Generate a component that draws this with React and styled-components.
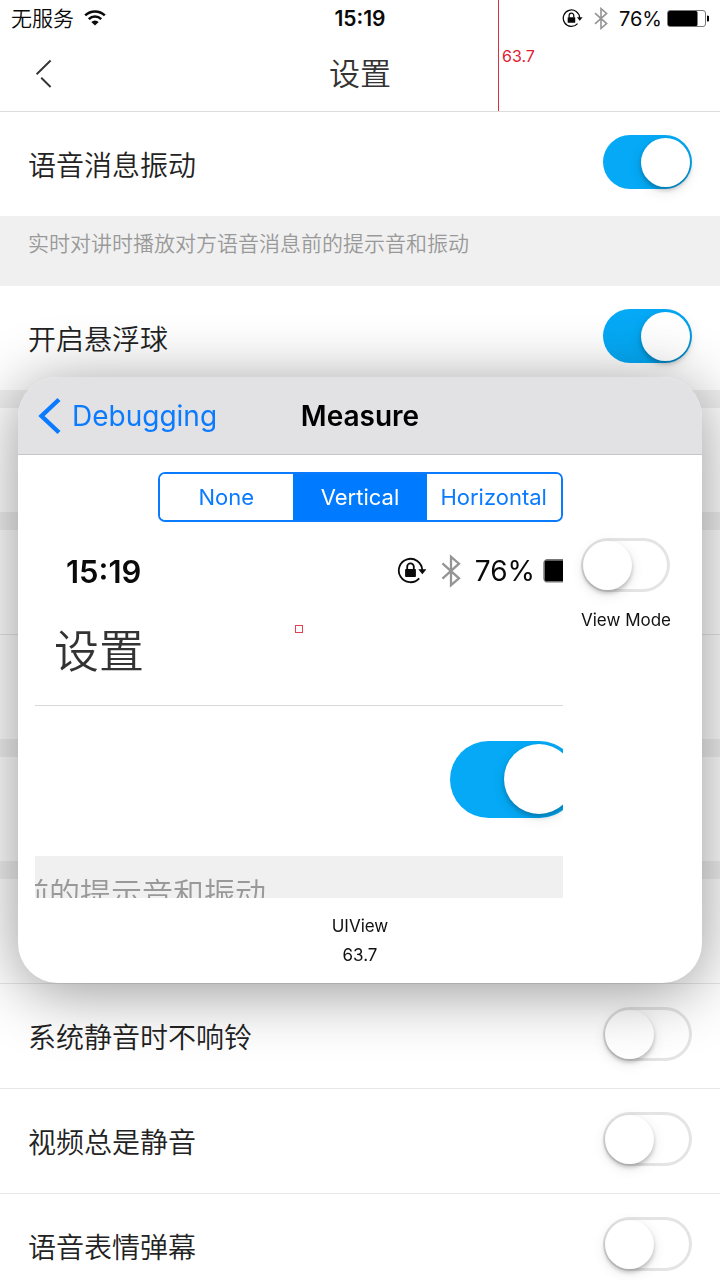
import React from "react";
import styled, { createGlobalStyle, css } from "styled-components";

const GlobalStyle = createGlobalStyle`
  *, *::before, *::after { box-sizing: border-box; }
  body {
    margin: 0;
    background: #fff;
    color: #222;
    font-family: Inter, "Noto Sans CJK SC", sans-serif;
  }
  button, input { font: inherit; margin: 0; }
  h1, h2, p { margin: 0; }
`;

const Screen = styled.main`
  position: relative;
  height: 100vh;
  overflow: hidden;
`;

const Header = styled.header`
  border-bottom: 1px solid #dcdcdc;
`;

const StatusBar = styled.div`
  display: grid;
  grid-template-columns: 1fr auto 1fr;
  align-items: center;
  height: 37px;
  padding: 0 11px;
  color: #0a0a0a;
  font-size: 20px;
`;

const StatusGroup = styled.div`
  display: flex;
  align-items: center;
  justify-content: ${(p) => (p.$end ? "flex-end" : "flex-start")};
  gap: ${(p) => p.$gap}px;
`;

const Carrier = styled.span`
  font-size: 21px;
  line-height: 24px;
  font-weight: 350;
`;

const Clock = styled.time`
  font-size: ${(p) => (p.$large ? 31 : 21)}px;
  font-weight: 600;
  color: #0a0a0a;
`;

const NavBar = styled.div`
  display: grid;
  grid-template-columns: 1fr auto 1fr;
  align-items: center;
  height: 74px;
  padding: 0 35px;
`;

const IconButton = styled.button`
  display: flex;
  justify-self: start;
  padding: 0;
  border: 0;
  background: none;
  color: #333;
`;

const Title = styled.h1`
  font-size: ${(p) => (p.$large ? 45 : 31)}px;
  line-height: ${(p) => (p.$large ? 64 : 40)}px;
  font-weight: 350;
  color: #333;
`;

const Ruler = styled.div`
  position: absolute;
  top: 0;
  left: 498px;
  display: flex;
  align-items: center;
  height: 111px;
  padding-left: 3px;
  border-left: 1px solid #d9303f;
  color: #e02030;
  font-size: 16px;
`;

const Row = styled.div`
  display: flex;
  align-items: center;
  justify-content: space-between;
  height: 104px;
  padding: 0 28px;
`;

const RowLabel = styled.label`
  padding-top: 3px;
  font-size: 28px;
  line-height: 40px;
  font-weight: 350;
  color: #222;
`;

const Divider = styled.hr`
  height: 1px;
  margin: 0;
  border: 0;
  background: #e6e6e6;
`;

const Gap = styled.div`
  height: 18px;
  background: #f0f0f0;
`;

const Note = styled.p`
  height: 70px;
  padding: 13px 28px;
  background: #f0f0f0;
  color: #999;
  font-size: 21px;
  line-height: 30px;
  font-weight: 350;
`;

const switchSizes = {
  normal: css`
    --w: 89px;
    --h: 54px;
    --knob: 49px;
    --inset: 2px;
  `,
  large: css`
    --w: 128px;
    --h: 77px;
    --knob: 70px;
    --inset: 4px;
  `,
};

const Switch = styled.input.attrs({ type: "checkbox", role: "switch" })`
  ${(p) => switchSizes[p.$size || "normal"]}
  appearance: none;
  flex: none;
  display: flex;
  align-items: center;
  width: var(--w);
  height: var(--h);
  margin-bottom: 4px;
  border-radius: var(--h);
  box-shadow: inset 0 0 0 3px #e4e4e4;

  &::before {
    content: "";
    width: var(--knob);
    height: var(--knob);
    margin: 0 var(--inset);
    border-radius: 50%;
    background: #fff;
    box-shadow: 0 3px 4px rgba(0, 0, 0, 0.22), 0 4px 14px rgba(0, 0, 0, 0.1);
  }

  &:checked {
    justify-content: flex-end;
    background: #05a9f5;
    box-shadow: none;
  }
`;

const Panel = styled.section`
  position: absolute;
  top: 377px;
  left: 18px;
  right: 18px;
  overflow: hidden;
  border-radius: 40px;
  background: #fff;
`;

const PanelShadow = styled.div`
  position: absolute;
  inset: 0;
  filter: drop-shadow(0 8px 32px rgba(0, 0, 0, 0.42));
`;

const PanelHeader = styled.header`
  display: grid;
  grid-template-columns: 1fr auto 1fr;
  align-items: center;
  height: 78px;
  padding: 1px 20px 0;
  border-bottom: 1px solid #c6c6c8;
  background: #e2e2e4;
`;

const BackLink = styled.a`
  display: flex;
  align-items: center;
  gap: 10px;
  color: #0a7aff;
  font-size: 28px;
  text-decoration: none;
`;

const PanelTitle = styled.h2`
  color: #000;
  font-size: 28px;
  font-weight: 600;
`;

const Segments = styled.div`
  display: grid;
  grid-template-columns: repeat(3, 1fr);
  width: 405px;
  height: 50px;
  margin: 17px auto 0;
  overflow: hidden;
  border: 2px solid #0a7aff;
  border-radius: 7px;
`;

const Segment = styled.button`
  padding: 0;
  border: 0;
  background: ${(p) => (p.$active ? "#007aff" : "#fff")};
  color: ${(p) => (p.$active ? "#fff" : "#0a7aff")};
  font-size: 22px;
`;

const PanelBody = styled.div`
  display: flex;
  padding: 0 17px;
`;

const Magnifier = styled.div`
  position: relative;
  flex: 1;
  min-width: 0;
  height: 376px;
  overflow: hidden;
`;

const Target = styled.span`
  position: absolute;
  top: 103px;
  left: 50%;
  width: 8px;
  height: 8px;
  margin-left: -4px;
  border: 1px solid #e0414f;
`;

const ZoomHeader = styled.div`
  height: 184px;
  border-bottom: 1px solid #d8d8d8;
`;

const ZoomStatus = styled.div`
  display: flex;
  align-items: center;
  justify-content: space-between;
  height: 98px;
  padding-left: 31px;
  color: #0a0a0a;
  font-size: 28px;
`;

const ZoomTitle = styled.div`
  padding-left: 19px;
`;

const ZoomRow = styled.div`
  display: flex;
  align-items: center;
  height: 150px;
  padding-left: 415px;
`;

const ZoomNote = styled.p`
  display: flex;
  justify-content: flex-end;
  height: 42px;
  padding: 20px 297px 0 0;
  background: #f0f0f0;
  color: #999;
  font-size: 31px;
  line-height: 36px;
  font-weight: 350;
  white-space: nowrap;
`;

const Side = styled.div`
  display: flex;
  flex-direction: column;
  align-items: flex-start;
  gap: 12px;
  width: 122px;
  padding: 16px 0 0 18px;
`;

const Caption = styled.label`
  color: #111;
  font-size: 17px;
  line-height: 24px;
  white-space: nowrap;
`;

const Readout = styled.footer`
  padding: 14px 0 13px;
  color: #111;
  font-size: 17px;
  line-height: 29px;
  text-align: center;
`;

function WifiIcon() {
  return (
    <svg width="22" height="17" viewBox="0 0 22 17" fill="none" stroke="#0a0a0a" strokeWidth="2.5" aria-hidden="true">
      <path d="M1.2 5.4a14 14 0 0 1 19.6 0" />
      <path d="M4.8 9.1a8.8 8.8 0 0 1 12.4 0" />
      <path d="M11 15.6 7.3 11.9a5.3 5.3 0 0 1 7.4 0z" fill="#0a0a0a" stroke="none" />
    </svg>
  );
}

function BackIcon() {
  return (
    <svg width="18" height="30" viewBox="0 0 18 30" fill="none" stroke="currentColor" strokeWidth="1.9" aria-hidden="true">
      <path d="M15.6 1.5 1.6 15.2M6.2 18.8 15.6 28" />
    </svg>
  );
}

function ChevronIcon() {
  return (
    <svg width="24" height="38" viewBox="0 0 24 38" fill="none" stroke="currentColor" strokeWidth="4.4" aria-hidden="true">
      <path d="M21 2.5 3.5 19 21 35.5" />
    </svg>
  );
}

function RotationLockIcon({ size }) {
  return (
    <svg width={size} height={size} viewBox="0 0 20 20" fill="none" stroke="#0a0a0a" aria-hidden="true">
      <path d="M14.8 14.9A7.8 7.8 0 1 1 16.8 9.4" strokeWidth="1.2" />
      <path d="M14.2 8.9h5.4l-2.7 3.2z" fill="#0a0a0a" stroke="none" />
      <rect x="5.4" y="8.7" width="7.2" height="5.3" rx="0.5" fill="#0a0a0a" stroke="none" />
      <path d="M6.8 9V7.1a2.2 2.2 0 0 1 4.4 0V9" strokeWidth="1.2" />
    </svg>
  );
}

function BluetoothIcon({ width, height }) {
  return (
    <svg width={width} height={height} viewBox="0 0 14 23" fill="none" stroke="#959595" strokeWidth="1.6" aria-hidden="true">
      <path d="M1 6.2 12.6 16.6 7 21.4V1.6l5.6 4.8L1 16.8" />
    </svg>
  );
}

function BatteryIcon({ width, height, clipped }) {
  return (
    <svg width={width} height={height} viewBox={clipped ? "0 0 14 18" : "0 0 42 18"} fill="none" aria-hidden="true">
      <rect x="0.5" y="0.5" width="38" height="16" rx="2.5" stroke="#777" />
      <rect x="1" y="1" width="29.5" height="15" rx="1.5" fill="#000" />
      <path d="M40 5.5a3 3 0 0 1 0 6z" fill="#000" />
    </svg>
  );
}

function SettingRow({ id, label, on }) {
  return (
    <Row>
      <RowLabel htmlFor={id}>{label}</RowLabel>
      <Switch id={id} defaultChecked={on} />
    </Row>
  );
}

function MagnifiedView() {
  return (
    <Magnifier>
      <ZoomHeader>
        <ZoomStatus>
          <Clock $large>15:19</Clock>
          <StatusGroup $gap={14}>
            <RotationLockIcon size={30} />
            <BluetoothIcon width={20} height={34} />
            <StatusGroup $gap={8}>
              <span>76%</span>
              <BatteryIcon width={20} height={25} clipped />
            </StatusGroup>
          </StatusGroup>
        </ZoomStatus>
        <ZoomTitle>
          <Title as="p" $large>设置</Title>
        </ZoomTitle>
      </ZoomHeader>
      <ZoomRow>
        <Switch $size="large" defaultChecked aria-label="语音消息振动" />
      </ZoomRow>
      <ZoomNote>前的提示音和振动</ZoomNote>
      <Target />
    </Magnifier>
  );
}

function MeasurePanel() {
  const [mode, setMode] = React.useState("Vertical");
  return (
    <PanelShadow>
      <Panel>
        <PanelHeader>
          <BackLink href="#debugging">
            <ChevronIcon />
            Debugging
          </BackLink>
          <PanelTitle>Measure</PanelTitle>
        </PanelHeader>
        <Segments>
          {["None", "Vertical", "Horizontal"].map((name) => (
            <Segment
              key={name}
              type="button"
              aria-pressed={mode === name}
              $active={mode === name}
              onClick={() => setMode(name)}
            >
              {name}
            </Segment>
          ))}
        </Segments>
        <PanelBody>
          <MagnifiedView />
          <Side>
            <Switch id="view-mode" />
            <Caption htmlFor="view-mode">View Mode</Caption>
          </Side>
        </PanelBody>
        <Readout>
          <p>UIView</p>
          <p>63.7</p>
        </Readout>
      </Panel>
    </PanelShadow>
  );
}

export default function App() {
  return (
    <Screen>
      <GlobalStyle />
      <Header>
        <StatusBar>
          <StatusGroup $gap={10}>
            <Carrier>无服务</Carrier>
            <WifiIcon />
          </StatusGroup>
          <Clock>15:19</Clock>
          <StatusGroup $end $gap={11}>
            <RotationLockIcon size={21} />
            <BluetoothIcon width={14} height={23} />
            <StatusGroup $gap={5}>
              <span>76%</span>
              <BatteryIcon width={42} height={18} />
            </StatusGroup>
          </StatusGroup>
        </StatusBar>
        <NavBar>
          <IconButton type="button" aria-label="返回">
            <BackIcon />
          </IconButton>
          <Title>设置</Title>
        </NavBar>
      </Header>
      <SettingRow id="voice-vibrate" label="语音消息振动" on />
      <Note>实时对讲时播放对方语音消息前的提示音和振动</Note>
      <SettingRow id="floating-ball" label="开启悬浮球" on />
      <Gap />
      <Row />
      <Gap />
      <Row />
      <Divider />
      <Row />
      <Gap />
      <Row />
      <Gap />
      <Row />
      <Divider />
      <SettingRow id="silent-ring" label="系统静音时不响铃" />
      <Divider />
      <SettingRow id="video-mute" label="视频总是静音" />
      <Divider />
      <SettingRow id="emoji-barrage" label="语音表情弹幕" />
      <Ruler>63.7</Ruler>
      <MeasurePanel />
    </Screen>
  );
}
